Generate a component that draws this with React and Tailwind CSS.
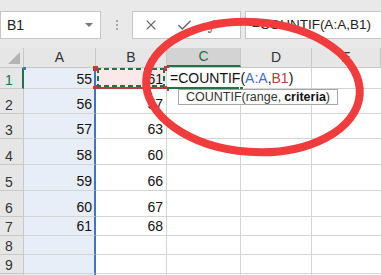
import { X, Check } from 'lucide-react'

const FONT = { fontFamily: '"Liberation Sans", Arial, sans-serif' }

const COLS = [
  { key: 'A', w: 'w-[72px]' },
  { key: 'B', w: 'w-[71px]' },
  { key: 'C', w: 'w-[74px]' },
  { key: 'D', w: 'w-[71px]' },
  { key: 'E', w: 'flex-1' }
]

const ROWS = [
  { n: 1, h: 'h-[21px]', a: 55, b: 61 },
  { n: 2, h: 'h-[25px]', a: 56, b: 57 },
  { n: 3, h: 'h-[25px]', a: 57, b: 63 },
  { n: 4, h: 'h-[26px]', a: 58, b: 60 },
  { n: 5, h: 'h-[26px]', a: 59, b: 66 },
  { n: 6, h: 'h-[26px]', a: 60, b: 67 },
  { n: 7, h: 'h-[19px]', a: 61, b: 68 },
  { n: 8, h: 'h-[19px]' },
  { n: 9, h: 'h-[19px]' },
  // row 10 only peeks in at the bottom edge, so no label
  { n: 10, h: 'h-[19px]', hidden: true }
]

function Toolbar() {
  return (
    <div className="h-[48px] bg-[#e9e9e9] flex items-start pt-[11px] shrink-0">
      <div className="w-[101px] h-[28px] bg-white border border-[#c6c6c6] flex items-center justify-between pl-[6px] pr-[7px]">
        <span className="text-[14px] text-[#222]">B1</span>
        <span className="w-0 h-0 border-l-[4px] border-r-[4px] border-t-[4px] border-l-transparent border-r-transparent border-t-[#777]" />
      </div>
      <div className="w-[31px] h-[28px] flex flex-col items-center justify-center gap-[2px]">
        <span className="w-[2px] h-[2px] bg-[#a8a8a8]" />
        <span className="w-[2px] h-[2px] bg-[#a8a8a8]" />
        <span className="w-[2px] h-[2px] bg-[#a8a8a8]" />
      </div>
      <div className="w-[109px] h-[28px] bg-white border border-[#c6c6c6] flex items-center pl-[10px] gap-[17px] text-[#6a6a6a]">
        <X size={16} strokeWidth={1.6} />
        <Check size={17} strokeWidth={2.2} />
        <span className="italic text-[14px] font-serif">f</span>
      </div>
      <div className="ml-[4px] flex-1 h-[28px] bg-white border border-[#c6c6c6] border-r-0 flex items-center pl-[6px] text-[13.5px] text-[#222] whitespace-nowrap overflow-hidden">
        =COUNTIF(A:A,B1)
      </div>
    </div>
  )
}

function HeaderRow() {
  return (
    <div className="flex h-[20px] bg-[#e6e6e6] border-b border-[#c8c8c8] shrink-0">
      <div className="w-[24px] border-r border-[#c8c8c8] relative">
        <span className="absolute right-[3px] bottom-[3px] w-0 h-0 border-l-[12px] border-b-[12px] border-l-transparent border-b-[#b4b4b4]" />
      </div>
      {COLS.map(c => (
        <div
          key={c.key}
          className={`${c.w} border-r border-[#c8c8c8] flex items-center justify-center text-[14px] ${
            c.key === 'C' ? 'bg-[#d3d3d3] text-[#217346] border-b-2 border-b-[#217346]' : 'text-[#333]'
          }`}
        >
          {c.key}
        </div>
      ))}
    </div>
  )
}

function MarchingAnts() {
  return (
    <>
      <span className="absolute left-[0px] right-[0px] top-[0px] h-[2px] bg-[repeating-linear-gradient(90deg,#217346_0_5px,transparent_5px_8px)]" />
      <span className="absolute left-[0px] right-[0px] bottom-[1px] h-[2px] bg-[repeating-linear-gradient(90deg,#217346_0_5px,transparent_5px_8px)]" />
      <span className="absolute top-[0px] bottom-[0px] left-[1px] w-[2px] bg-[repeating-linear-gradient(180deg,#217346_0_5px,transparent_5px_8px)]" />
      <span className="absolute top-[0px] bottom-[0px] right-[1px] w-[2px] bg-[repeating-linear-gradient(180deg,#217346_0_5px,transparent_5px_8px)]" />
    </>
  )
}

function Row({ row }) {
  const first = row.n === 1
  return (
    <div className={`flex ${row.h} shrink-0`}>
      <div
        className={`w-[24px] bg-[#e6e6e6] border-r border-b border-[#c8c8c8] flex items-end pl-[5px] pb-[1px] text-[14px] leading-none ${
          first ? 'text-[#217346] border-r-2 border-r-[#217346]' : 'text-[#333]'
        }`}
      >
        {!row.hidden && row.n}
      </div>
      {/* column A: referenced range */}
      <div className="w-[72px] bg-[#e8eef8] border-r-2 border-r-[#4472c4] border-b border-b-[#d4d4d4] flex items-end justify-end pr-[2px] pb-[2px] text-[14px] leading-none text-[#111] relative">
        {first && <span className="absolute -left-[1px] -top-[1px] w-[3px] h-[3px] bg-[#4472c4]" />}
        {row.a}
      </div>
      {/* column B */}
      <div
        className={`w-[71px] border-r border-b border-[#d4d4d4] flex items-end justify-end pr-[3px] pb-[2px] text-[14px] leading-none text-[#111] relative ${
          first ? 'bg-[#fbe9e9]' : 'bg-white'
        }`}
      >
        {first && (
          <>
            <span className="absolute left-0 right-0 bottom-[-1px] h-[2px] bg-[#c0393b]" />
            <MarchingAnts />
            <span className="absolute -left-[3px] -top-[2px] w-[5px] h-[5px] bg-[#c0393b]" />
            <span className="absolute -right-[3px] -top-[2px] w-[5px] h-[5px] bg-[#c0393b]" />
            <span className="absolute -left-[3px] -bottom-[3px] w-[5px] h-[5px] bg-[#c0393b]" />
            <span className="absolute -right-[3px] -bottom-[3px] w-[5px] h-[5px] bg-[#c0393b]" />
          </>
        )}
        <span className="relative">{row.b}</span>
      </div>
      {/* column C */}
      {first ? (
        <div className="w-[74px] border-b-2 border-[#217346] bg-white flex items-end pl-[3px] pb-[2px] text-[14px] leading-none text-[#111] whitespace-nowrap relative z-10">
          <span>
            =COUNTIF(<span className="text-[#3f6fc6]">A:A</span>,<span className="text-[#c0393b]">B1</span>)
          </span>
          <span className="absolute -right-[3px] -bottom-[4px] w-[5px] h-[5px] bg-[#217346] border border-white" />
        </div>
      ) : (
        <div className="w-[74px] border-r border-b border-[#d4d4d4] bg-white" />
      )}
      <div className="w-[71px] border-r border-b border-[#d4d4d4] bg-white" />
      <div className="flex-1 border-b border-[#d4d4d4] bg-white" />
    </div>
  )
}

export default function App() {
  return (
    <div className="w-[381px] h-[275px] overflow-hidden bg-white relative flex flex-col" style={FONT}>
      <Toolbar />
      <HeaderRow />
      {ROWS.map(r => (
        <Row key={r.n} row={r} />
      ))}

      {/* function tooltip */}
      <div className="absolute left-[178px] top-[89px] h-[16px] px-[7px] bg-white border border-[#a6a6a6] flex items-center text-[12.5px] text-[#333] whitespace-nowrap z-20">
        COUNTIF(range, <b className="ml-[3px] text-[#111]">criteria</b>)
      </div>

      {/* red ellipse annotation */}
      <svg className="absolute left-0 top-0 z-30 pointer-events-none" width="381" height="275">
        <ellipse
          cx="253"
          cy="87"
          rx="107"
          ry="65"
          fill="none"
          stroke="#f03c3c"
          strokeWidth="8"
          transform="rotate(4 253 87)"
        />
      </svg>
    </div>
  )
}
